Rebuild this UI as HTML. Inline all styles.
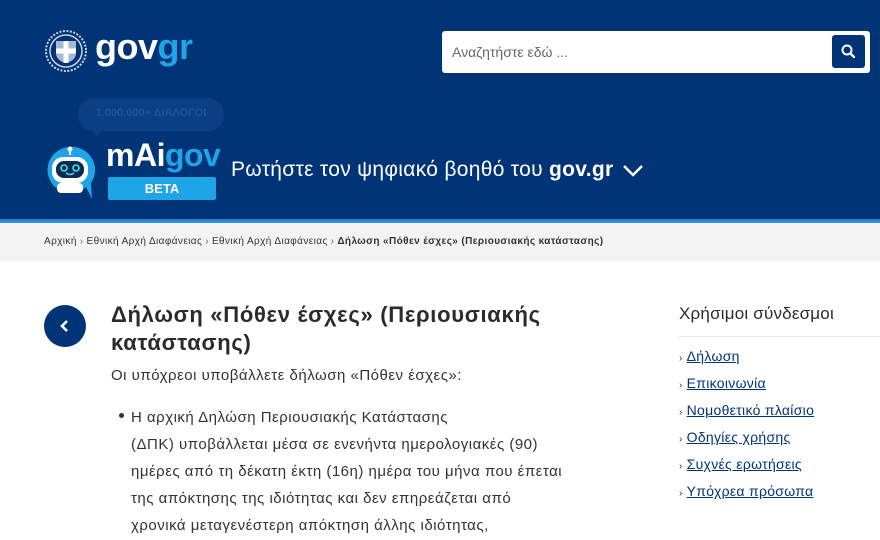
<!DOCTYPE html>
<html><head><meta charset="utf-8"><style>
*{margin:0;padding:0;box-sizing:border-box}
body{width:880px;height:540px;overflow:hidden;background:#fff;font-family:"Liberation Sans",sans-serif;color:#2b2b2b;position:relative}
.hdr{position:absolute;left:0;top:0;width:880px;height:219px;background:#003476}
.stripe{position:absolute;left:0;top:219px;width:880px;height:4px;background:linear-gradient(#1a7fd0,#3a9be0)}
.bc{position:absolute;left:0;top:223px;width:880px;height:38px;background:#f3f3f3;font-size:10px;color:#333;padding:13px 0 0 44px;white-space:nowrap;letter-spacing:0.4px}
.bc .s{color:#1a7fd0;margin:0 3px}
.abs{position:absolute}
.ln{height:27px;white-space:nowrap}
.ar{font-size:10px;margin-right:4px;color:#333}
</style></head><body>
<div class="hdr"></div><div class="stripe"></div>
<svg class="abs" style="left:44px;top:29px" width="44" height="44" viewBox="0 0 44 44">
<circle cx="22" cy="22" r="20" fill="none" stroke="#c9d3e3" stroke-width="2" stroke-dasharray="2 1.5"/>
<circle cx="22" cy="22" r="16" fill="none" stroke="#c9d3e3" stroke-width="1.5"/>
<path d="M12 12h20v12c0 6-5 9-10 10c-5-1-10-4-10-10z" fill="#a8b9d4"/>
<rect x="19.5" y="12" width="5" height="22" fill="#fff"/><rect x="12" y="19.5" width="20" height="5" fill="#fff"/>
</svg>
<div class="abs" style="left:95px;top:26px;font-size:36px;font-weight:bold;color:#fff;letter-spacing:-0.5px">gov<span style="color:#1fa4e8">gr</span></div>
<div class="abs" style="left:442px;top:31px;width:428px;height:42px;background:#fff;border-radius:3px"></div>
<div class="abs" style="left:452px;top:44px;font-size:14px;color:#666">Αναζητήστε εδώ ...</div>
<div class="abs" style="left:832px;top:35px;width:33px;height:33px;background:#003476;border-radius:3px"></div>
<svg class="abs" style="left:840px;top:43px" width="17" height="17" viewBox="0 0 17 17"><circle cx="7" cy="7" r="4.5" fill="none" stroke="#fff" stroke-width="2"/><path d="M10.5 10.5L14 14" stroke="#fff" stroke-width="2.3" stroke-linecap="round"/></svg>
<div class="abs" style="left:78px;top:98px;width:146px;height:33px;border-radius:16px;background:#0a4083"></div>
<svg class="abs" style="left:94px;top:128px" width="14" height="10"><path d="M0 0h12L2 9z" fill="#0a4083"/></svg>
<div class="abs" style="left:78px;top:107px;width:146px;text-align:center;font-size:11px;font-weight:bold;color:#1d5497">1.000.000+ ΔΙΑΛΟΓΟΙ</div>
<svg class="abs" style="left:43px;top:143px" width="54" height="58" viewBox="0 0 54 58">
<path d="M27 4a23 23 0 1 0 16 40l6 12l-1-16a23 23 0 0 0-21-36z" fill="#1fa4e8"/>
<circle cx="27" cy="6" r="2.5" fill="#fff"/><rect x="26" y="7" width="2" height="5" fill="#fff"/>
<rect x="9" y="14" width="36" height="26" rx="11" fill="#fff"/>
<rect x="13" y="18" width="28" height="17" rx="8" fill="#0b2a4f"/>
<circle cx="21" cy="25" r="3" fill="none" stroke="#3ee0f0" stroke-width="1.6"/><circle cx="33" cy="25" r="3" fill="none" stroke="#3ee0f0" stroke-width="1.6"/>
<path d="M23 30q4 3 8 0" stroke="#3ee0f0" stroke-width="1.5" fill="none"/>
<rect x="14" y="40" width="26" height="10" rx="4" fill="#fff"/>
</svg>
<div class="abs" style="left:106px;top:137px;font-size:32px;font-weight:bold;color:#fff;letter-spacing:-0.5px">mAi<span style="color:#1fa4e8">gov</span></div>
<div class="abs" style="left:108px;top:177px;width:108px;height:23px;background:#1fa4e8;border-radius:2px;color:#fff;font-weight:bold;font-size:13px;text-align:center;line-height:23px">BETA</div>
<div class="abs" style="left:231px;top:158px;font-size:21px;color:#fff;white-space:nowrap;letter-spacing:0.3px">Ρωτήστε τον ψηφιακό βοηθό του <b>gov.gr</b></div>
<svg class="abs" style="left:622px;top:164px" width="22" height="14"><path d="M2 2l9 9l9-9" stroke="#fff" stroke-width="2.5" fill="none"/></svg>
<div class="bc">Αρχική<span class="s">›</span>Εθνική Αρχή Διαφάνειας<span class="s">›</span>Εθνική Αρχή Διαφάνειας<span class="s">›</span><b>Δήλωση «Πόθεν έσχες» (Περιουσιακής κατάστασης)</b></div>
<div class="abs" style="left:44px;top:305px;width:42px;height:42px;border-radius:50%;background:#003476"></div>
<svg class="abs" style="left:59px;top:319px" width="12" height="14"><path d="M8 2L3 7l5 5" stroke="#fff" stroke-width="2.6" fill="none"/></svg>
<div class="abs" style="left:111px;top:301px;font-size:22px;font-weight:bold;line-height:28px;color:#2b2b2b;letter-spacing:0.7px;white-space:nowrap">Δήλωση «Πόθεν έσχες» (Περιουσιακής<br>κατάστασης)</div>
<div class="abs" style="left:111px;top:367px;font-size:15px;color:#333;letter-spacing:0.5px">Οι υπόχρεοι υποβάλλετε δήλωση «Πόθεν έσχες»:</div>
<div class="abs" style="left:119px;top:413px;width:5px;height:5px;border-radius:50%;background:#333"></div>
<div class="abs" style="left:131px;top:404px;font-size:15px;line-height:27px;color:#333;letter-spacing:0.5px">
<div class="ln">Η αρχική Δηλώση Περιουσιακής Κατάστασης</div>
<div class="ln">(ΔΠΚ) υποβάλλεται μέσα σε ενενήντα ημερολογιακές (90)</div>
<div class="ln">ημέρες από τη δέκατη έκτη (16η) ημέρα του μήνα που έπεται</div>
<div class="ln">της απόκτησης της ιδιότητας και δεν επηρεάζεται από</div>
<div class="ln">χρονικά μεταγενέστερη απόκτηση άλλης ιδιότητας,</div>
</div>
<div class="abs" style="left:679px;top:304px;font-size:17px;color:#2b2b2b;letter-spacing:0.2px">Χρήσιμοι σύνδεσμοι</div>
<div class="abs" style="left:679px;top:336px;width:201px;height:1px;background:#e6e6e6"></div>
<div class="abs" style="left:679px;top:343px;font-size:14px;line-height:27px;color:#003476;letter-spacing:0.3px">
<div class="ln"><span class="ar">›</span><u>Δήλωση</u></div>
<div class="ln"><span class="ar">›</span><u>Επικοινωνία</u></div>
<div class="ln"><span class="ar">›</span><u>Νομοθετικό πλαίσιο</u></div>
<div class="ln"><span class="ar">›</span><u>Οδηγίες χρήσης</u></div>
<div class="ln"><span class="ar">›</span><u>Συχνές ερωτήσεις</u></div>
<div class="ln"><span class="ar">›</span><u>Υπόχρεα πρόσωπα</u></div>
</div>
</body></html>
